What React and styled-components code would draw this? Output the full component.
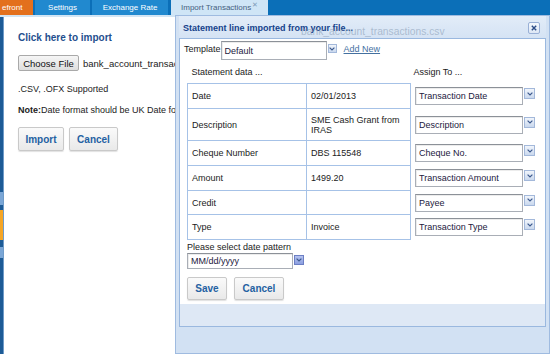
import React from 'react';
import styled, { createGlobalStyle } from 'styled-components';

const GlobalStyle = createGlobalStyle`
  html, body { margin: 0; padding: 0; background: #fff; }
  body { font-family: "Liberation Sans", Arial, sans-serif; font-size: 9px; color: #222; overflow: hidden; }
  #root { width: 550px; height: 354px; position: relative; overflow: hidden; }
`;

const Page = styled.div`
  position: relative;
  width: 550px;
  height: 354px;
  display: flex;
  flex-direction: column;
  background: #fff;
`;

const TabBar = styled.div`
  height: 15px;
  flex-shrink: 0;
  display: flex;
  gap: 2px;
  background: #0b6fb8;
`;

const Tab = styled.div`
  width: ${p => p.$w}px;
  flex-shrink: 0;
  box-sizing: border-box;
  margin-left: ${p => p.$ml || 0}px;
  padding: 0 ${p => p.$pad || 0}px;
  background: ${p => (p.$orange ? '#e3701d' : p.$active ? '#cfe5f6' : '#2189cf')};
  color: ${p => (p.$active ? '#45617f' : '#fff')};
  font-size: 8px;
  display: flex;
  align-items: center;
  justify-content: ${p => p.$align || 'center'};
  white-space: nowrap;
  overflow: hidden;
`;

const TabClose = styled.span`
  margin-left: auto;
  margin-top: -5px;
  font-size: 7px;
  color: #7e9bb8;
`;

const SubBar = styled.div`
  height: 2px;
  flex-shrink: 0;
  background: #d2e5f4;
`;

const Main = styled.div`
  flex: 1;
  display: flex;
`;

const Strip = styled.div`
  width: 3px;
  flex-shrink: 0;
  background: #1d5b96;
  border-right: 1px solid #6f9bc8;
  display: flex;
  flex-direction: column;
`;

const StripMark = styled.div`
  height: ${p => p.$h}px;
  margin-top: ${p => p.$mt}px;
  background: ${p => p.$c};
`;

const Content = styled.div`
  flex: 1;
  padding: 15px 0 0 14px;
  display: flex;
  flex-direction: column;
  align-items: flex-start;
  white-space: nowrap;
`;

const Heading = styled.div`
  font-size: 10px;
  line-height: 12px;
  font-weight: bold;
  color: #1f4f8e;
`;

const FileRow = styled.div`
  margin-top: 11px;
  display: flex;
  align-items: center;
  gap: 4px;
  font-size: 9.5px;
  color: #222;
`;

const FileButton = styled.div`
  width: 61px;
  height: 16px;
  box-sizing: border-box;
  border: 1px solid #a9a9a9;
  border-radius: 2px;
  background: linear-gradient(#f6f6f6, #dedede);
  display: flex;
  align-items: center;
  justify-content: center;
  font-size: 9.5px;
  color: #111;
`;

const Info = styled.div`
  margin-top: ${p => p.$mt}px;
  font-size: 9px;
  line-height: 11px;
  color: #222;
  b { color: #222; }
`;

const ButtonRow = styled.div`
  display: flex;
  gap: ${p => p.$gap || 5}px;
  margin-top: ${p => p.$mt}px;
`;

const Button = styled.div`
  width: ${p => p.$w}px;
  height: ${p => p.$h || 24}px;
  box-sizing: border-box;
  border: 1px solid #c9c9c9;
  border-radius: 2px;
  background: linear-gradient(#fafafa, #e9e9e9);
  box-shadow: 0 1px 1px rgba(0, 0, 0, 0.12);
  display: flex;
  align-items: center;
  justify-content: center;
  font-size: 10px;
  font-weight: bold;
  color: #2461a2;
`;

/* ---------- Dialog ---------- */

const Window = styled.div`
  position: absolute;
  left: 175px;
  top: 15px;
  width: 375px;
  height: 339px;
  box-sizing: border-box;
  border: 1px solid #9fbbe0;
  background: #d2e1f3;
  padding: 0 3px;
  display: flex;
  flex-direction: column;
`;

const TitleBar = styled.div`
  position: relative;
  height: 22px;
  flex-shrink: 0;
  display: flex;
  align-items: center;
  justify-content: space-between;
  padding: 0 6px 0 4px;
  background: linear-gradient(#e2ecf8, #d5e3f4);
`;

const Title = styled.div`
  font-size: 9px;
  font-weight: bold;
  color: #15428b;
  margin-top: 1px;
`;

const Ghost = styled.div`
  position: absolute;
  left: 122px;
  top: 10px;
  font-size: 10.3px;
  color: rgba(130, 150, 175, 0.55);
  white-space: nowrap;
  pointer-events: none;
`;

const CloseButton = styled.div`
  width: 12px;
  height: 12px;
  box-sizing: border-box;
  border: 1px solid #99b0d6;
  border-radius: 2px;
  background: linear-gradient(#f4f8fd, #dde7f5);
  display: flex;
  align-items: center;
  justify-content: center;
  margin-top: 1px;
`;

const InnerPanel = styled.div`
  height: 289px;
  flex-shrink: 0;
  box-sizing: border-box;
  border: 1px solid #9ab8df;
  background: #dee8f5;
  display: flex;
  flex-direction: column;
`;

const WhiteArea = styled.div`
  height: 265px;
  background: #fff;
  padding: 2px 4px 0;
  box-sizing: border-box;
  display: flex;
  flex-direction: column;
  align-items: flex-start;
`;

const TemplateRow = styled.div`
  display: flex;
  align-items: flex-start;
`;

const Label = styled.span`
  font-size: 9px;
  color: #222;
  margin-top: 3px;
`;

const AddNew = styled.a`
  margin: 3px 0 0 7px;
  font-size: 9px;
  color: #44709f;
  text-decoration: underline;
`;

const SelectWrap = styled.div`
  display: flex;
  align-items: flex-start;
`;

const SelectBox = styled.div`
  width: ${p => p.$w}px;
  height: ${p => p.$h}px;
  box-sizing: border-box;
  border: 1px solid #a9aeb6;
  border-top-color: #8c9198;
  background: #fff;
  box-shadow: inset 1px 1px 0 #ececec;
  display: flex;
  align-items: center;
  padding-left: 3px;
  font-size: 9px;
  color: #1c2040;
  white-space: nowrap;
`;

const Trigger = styled.div`
  width: ${p => p.$s}px;
  height: ${p => p.$s}px;
  margin: ${p => p.$mt}px 0 0 1px;
  box-sizing: border-box;
  border: 1px solid ${p => (p.$strong ? '#6c7fc4' : '#a3b8da')};
  background: ${p => (p.$strong ? 'linear-gradient(#b4c2ef, #8c9fe0)' : 'linear-gradient(#f1f5fb, #c9d8ee)')};
  display: flex;
  align-items: center;
  justify-content: center;
`;

const Chevron = () => (
  <svg width="6" height="4" viewBox="0 0 6 4">
    <path d="M0.6 0.6 L3 3 L5.4 0.6" fill="none" stroke="#3d5a8e" strokeWidth="1.2" />
  </svg>
);

const Select = ({ w, h, s, mt, strong, children }) => (
  <SelectWrap>
    <SelectBox $w={w} $h={h}>{children}</SelectBox>
    <Trigger $s={s} $mt={mt} $strong={strong}>
      <Chevron />
    </Trigger>
  </SelectWrap>
);

const MapTable = styled.table`
  margin: 2px 0 0 3px;
  border-collapse: collapse;
  table-layout: fixed;
  font-size: 9px;
  color: #222;
`;

const HeadCell = styled.th`
  height: 20px;
  padding: 0 0 1px ${p => p.$pl}px;
  text-align: left;
  font-weight: normal;
  vertical-align: middle;
`;

const Cell = styled.td`
  height: ${p => p.$h}px;
  box-sizing: border-box;
  border: 1px solid #a6c2e7;
  padding: 0 4px;
  line-height: 10px;
  vertical-align: middle;
  white-space: nowrap;
`;

const AssignCell = styled.td`
  padding: 0 0 0 4px;
  vertical-align: middle;
`;

const PatternLabel = styled.div`
  margin: 2px 0 0 3px;
  font-size: 9px;
  line-height: 10px;
  color: #222;
`;

const PatternRow = styled.div`
  margin: 1px 0 0 3px;
`;

const rows = [
  { label: 'Date', value: '02/01/2013', assign: 'Transaction Date', h: 25 },
  { label: 'Description', value: <>SME Cash Grant from<br />IRAS</>, assign: 'Description', h: 32 },
  { label: 'Cheque Number', value: 'DBS 115548', assign: 'Cheque No.', h: 25 },
  { label: 'Amount', value: '1499.20', assign: 'Transaction Amount', h: 25 },
  { label: 'Credit', value: '', assign: 'Payee', h: 24 },
  { label: 'Type', value: 'Invoice', assign: 'Transaction Type', h: 25 },
];

export default function App() {
  return (
    <>
      <GlobalStyle />
      <Page>
        <TabBar>
          <Tab $w={33} $orange $align="flex-start" $pad={2}>efront</Tab>
          <Tab $w={55}>Settings</Tab>
          <Tab $w={76}>Exchange Rate</Tab>
          <Tab $w={97} $ml={1} $active $align="flex-start" $pad={10}>
            Import Transactions
            <TabClose>✕</TabClose>
          </Tab>
        </TabBar>
        <SubBar />
        <Main>
          <Strip>
            <StripMark $mt={175} $h={13} $c="#7aa6d6" />
            <StripMark $mt={5} $h={30} $c="#f5a524" />
            <StripMark $mt={7} $h={11} $c="#7aa6d6" />
          </Strip>
          <Content>
            <Heading>Click here to import</Heading>
            <FileRow>
              <FileButton>Choose File</FileButton>
              <span>bank_account_transactions.csv</span>
            </FileRow>
            <Info $mt={13}>.CSV, .OFX Supported</Info>
            <Info $mt={10}><b>Note:</b>Date format should be UK Date format</Info>
            <ButtonRow $mt={11} $gap={5}>
              <Button $w={46} $h={24}>Import</Button>
              <Button $w={49} $h={24}>Cancel</Button>
            </ButtonRow>
          </Content>
        </Main>

        <Window>
          <TitleBar>
            <Title>Statement line imported from your file...</Title>
            <Ghost>bank_account_transactions.csv</Ghost>
            <CloseButton>
              <svg width="6" height="6" viewBox="0 0 6 6">
                <path d="M0.8 0.8 L5.2 5.2 M5.2 0.8 L0.8 5.2" stroke="#2c4c86" strokeWidth="1.4" />
              </svg>
            </CloseButton>
          </TitleBar>
          <InnerPanel>
            <WhiteArea>
              <TemplateRow>
                <Label>Template</Label>
                <Select w={106} h={19} s={9} mt={3}>Default</Select>
                <AddNew>Add New</AddNew>
              </TemplateRow>
              <MapTable>
                <colgroup>
                  <col style={{ width: 119 }} />
                  <col style={{ width: 104 }} />
                  <col style={{ width: 127 }} />
                </colgroup>
                <thead>
                  <tr>
                    <HeadCell colSpan={2} $pl={4}>Statement data ...</HeadCell>
                    <HeadCell $pl={3}>Assign To ...</HeadCell>
                  </tr>
                </thead>
                <tbody>
                  {rows.map(r => (
                    <tr key={r.label}>
                      <Cell $h={r.h}>{r.label}</Cell>
                      <Cell $h={r.h}>{r.value}</Cell>
                      <AssignCell>
                        <Select w={108} h={18} s={11} mt={1}>{r.assign}</Select>
                      </AssignCell>
                    </tr>
                  ))}
                </tbody>
              </MapTable>
              <PatternLabel>Please select date pattern</PatternLabel>
              <PatternRow>
                <Select w={106} h={16} s={10} mt={2} strong>MM/dd/yyyy</Select>
              </PatternRow>
              <ButtonRow $mt={8} $gap={7} style={{ marginLeft: 3 }}>
                <Button $w={40} $h={23}>Save</Button>
                <Button $w={50} $h={23}>Cancel</Button>
              </ButtonRow>
            </WhiteArea>
          </InnerPanel>
        </Window>
      </Page>
    </>
  );
}
